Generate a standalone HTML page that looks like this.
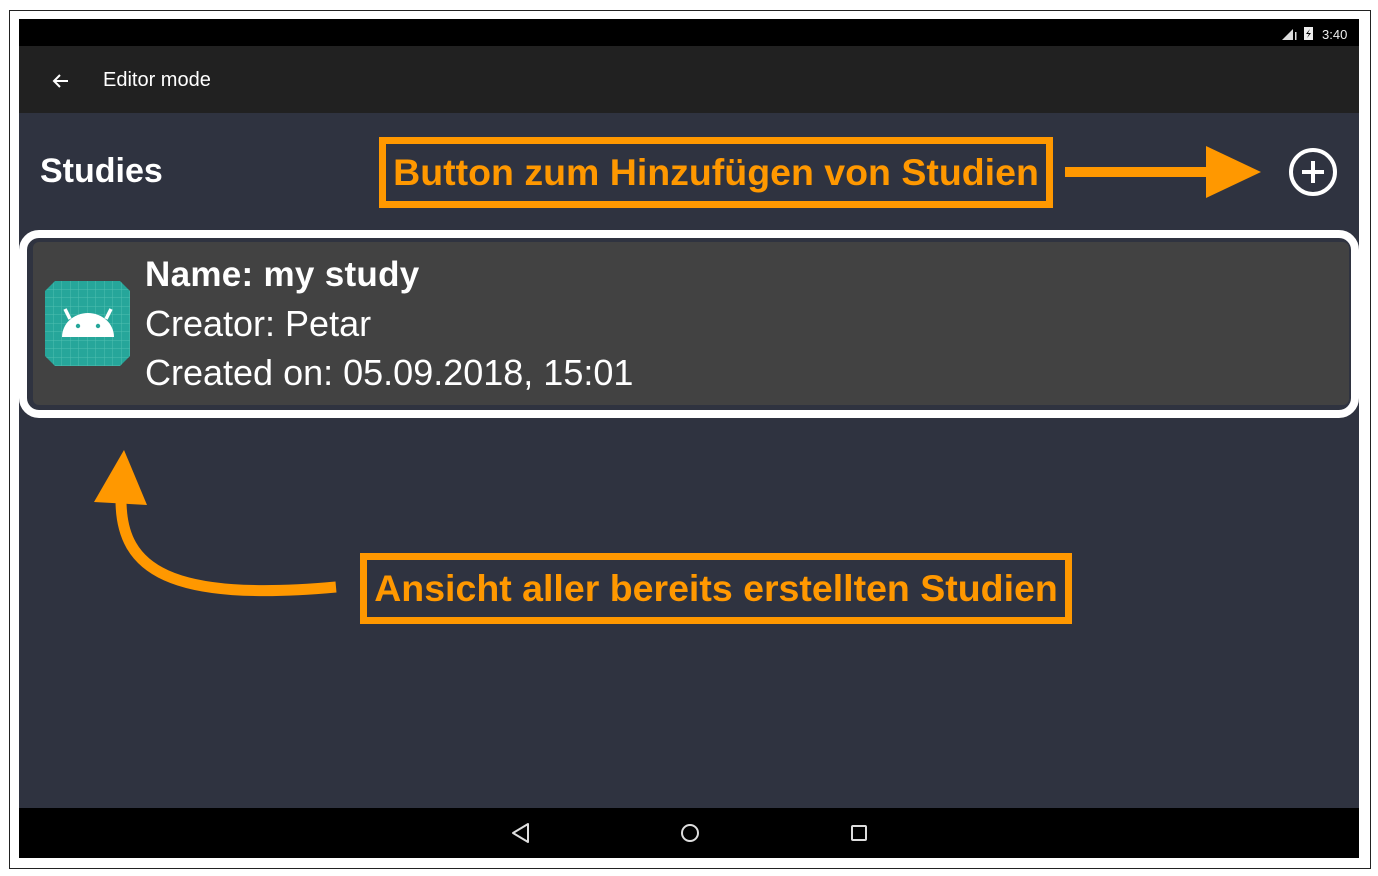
<!DOCTYPE html>
<html><head><meta charset="utf-8"><style>
*{margin:0;padding:0;box-sizing:border-box}
body{width:1378px;height:876px;background:#fff;position:relative;overflow:hidden;font-family:"Liberation Sans",sans-serif}
.frame{position:absolute;left:9px;top:10px;width:1362px;height:859px;border:1.5px solid #222}
.abs{position:absolute}
</style></head><body>
<div class="frame"></div>
<div class="abs" style="left:19px;top:19px;width:1340px;height:839px;background:#2f3340"></div>
<div class="abs" style="left:19px;top:19px;width:1340px;height:27px;background:#000"></div>
<div class="abs" style="left:19px;top:46px;width:1340px;height:67px;background:#212121"></div>
<div class="abs" style="left:19px;top:808px;width:1340px;height:50px;background:#000"></div>
<svg class="abs" style="left:1280px;top:25px" width="80" height="18">
<polygon points="2,15 13,4 13,15" fill="#ddd"/><rect x="15" y="7" width="1.5" height="8" fill="#ddd"/>
<rect x="24" y="2" width="9" height="13" fill="#eee"/><path d="M30 4 L26 9 L29 9 L27 13 L31 8 L28 8Z" fill="#000"/>
<text x="42" y="14" font-size="13" fill="#eee" font-family="Liberation Sans">3:40</text>
</svg>
<svg class="abs" style="left:50px;top:70px" width="22" height="22"><path d="M18 11H4M10 5L4 11L10 17" stroke="#fff" stroke-width="2" fill="none"/></svg>
<div class="abs" style="left:103px;top:69px;font-size:20px;color:#fff">Editor mode</div>
<div class="abs" style="left:40px;top:152px;font-size:34px;font-weight:bold;color:#fff">Studies</div>
<svg class="abs" style="left:1286px;top:146px" width="54" height="54"><circle cx="27" cy="26" r="22" stroke="#fff" stroke-width="4" fill="none"/><path d="M27 15V37M16 26H38" stroke="#fff" stroke-width="4"/></svg>
<div class="abs" style="left:19px;top:230px;width:1340px;height:188px;border:8px solid #fff;border-radius:20px"></div>
<div class="abs" style="left:33px;top:242px;width:1316px;height:163px;background:#424242;border-radius:6px"></div>
<svg class="abs" style="left:45px;top:281px" width="85" height="85">
<defs><pattern id="g" width="8.5" height="8.5" patternUnits="userSpaceOnUse"><path d="M8.5 0V8.5H0" stroke="#4fbfb0" stroke-width="1" fill="none"/></pattern></defs>
<path d="M10 0H75L85 10V75L75 85H10L0 75V10Z" fill="#26a69a"/><path d="M10 0H75L85 10V75L75 85H10L0 75V10Z" fill="url(#g)"/>
<path d="M17 56 A26 24 0 0 1 69 56Z" fill="#fff"/>
<path d="M25 38L20 28M61 38L66 28" stroke="#fff" stroke-width="3.5"/>
<circle cx="33" cy="45" r="2.2" fill="#26a69a"/><circle cx="53" cy="45" r="2.2" fill="#26a69a"/>
</svg>
<div class="abs" style="left:145px;top:253px;font-size:35px;font-weight:bold;color:#fff;line-height:44px;letter-spacing:0.3px">Name: my study</div>
<div class="abs" style="left:145px;top:302px;font-size:36px;color:#fff;line-height:44px">Creator: Petar</div>
<div class="abs" style="left:145px;top:351px;font-size:36px;color:#fff;line-height:44px">Created on: 05.09.2018, 15:01</div>
<div class="abs" style="left:379px;top:137px;width:674px;height:71px;border:7px solid #ff9800"></div>
<div class="abs" style="left:379px;top:137px;width:674px;height:71px;line-height:71px;text-align:center;font-size:37.5px;font-weight:bold;color:#ff9800;white-space:nowrap">Button zum Hinzufügen von Studien</div>
<div class="abs" style="left:360px;top:553px;width:712px;height:71px;border:7px solid #ff9800"></div>
<div class="abs" style="left:360px;top:553px;width:712px;height:71px;line-height:71px;text-align:center;font-size:37.5px;font-weight:bold;color:#ff9800;white-space:nowrap">Ansicht aller bereits erstellten Studien</div>
<svg class="abs" style="left:0;top:0" width="1378" height="876">
<rect x="1065" y="167" width="145" height="10" fill="#ff9800"/>
<polygon points="1206,146 1261,172 1206,198" fill="#ff9800"/>
<path d="M121 500 C121 570 170 602 336 587" stroke="#ff9800" stroke-width="11" fill="none"/>
<polygon points="124,450 94,502 147,505" fill="#ff9800"/>
</svg>
<svg class="abs" style="left:500px;top:818px" width="380" height="32">
<path d="M28 6L13 15L28 24Z" stroke="#ddd" stroke-width="2" fill="none" stroke-linejoin="round"/>
<circle cx="190" cy="15" r="8" stroke="#ddd" stroke-width="2" fill="none"/>
<rect x="352" y="8" width="14" height="14" stroke="#ddd" stroke-width="2" fill="none" rx="1"/>
</svg>
</body></html>
